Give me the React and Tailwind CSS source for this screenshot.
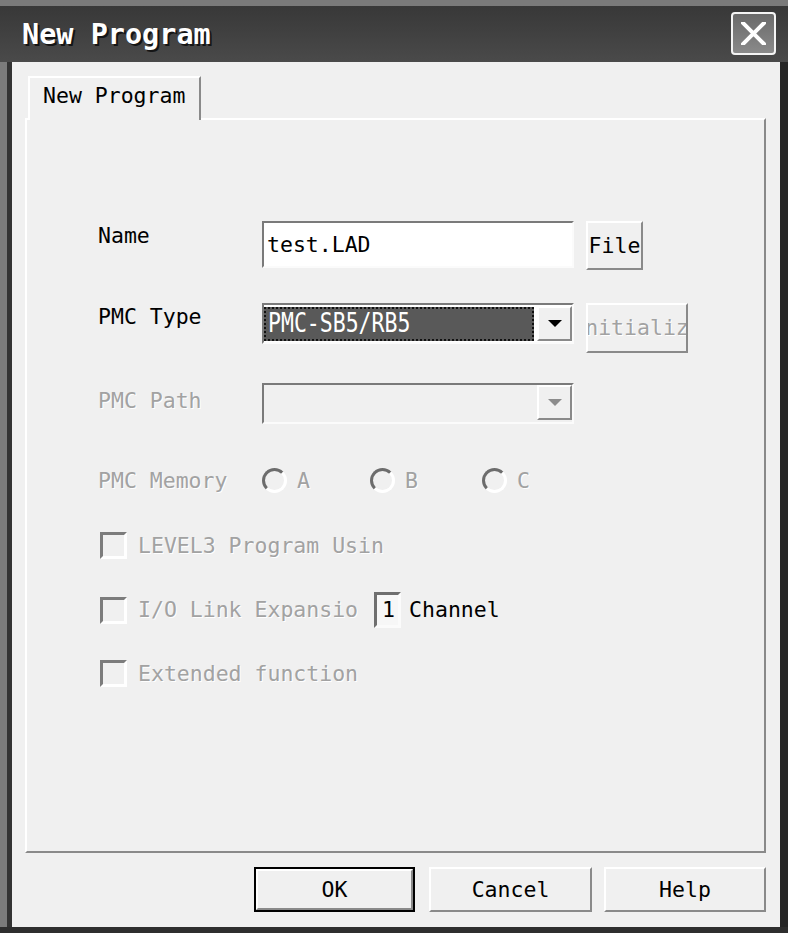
import React from 'react';

// Classic disabled-looking Windows dialog, greyscale like the scan.
const raised =
  'border-2 border-t-white border-l-white border-r-[#8a8a8a] border-b-[#8a8a8a] bg-[#f0f0f0]';
const sunken =
  'border-2 border-t-[#7a7a7a] border-l-[#7a7a7a] border-r-[#fbfbfb] border-b-[#fbfbfb]';
const grayText = 'text-[#a2a2a2] [text-shadow:1px_1px_0_#ffffff]';

const CheckBox = () => (
  <div className="ml-[2px] w-[27px] h-[27px] shrink-0 border-[3px] border-t-[#7c7c7c] border-l-[#7c7c7c] border-r-white border-b-white bg-[#f0f0f0]" />
);

const Radio = ({ label, width }) => (
  <div className="flex items-center gap-[10px]" style={{ width }}>
    <div className="w-[25px] h-[25px] shrink-0 rounded-full border-[3px] border-t-[#6c6c6c] border-l-[#6c6c6c] border-r-white border-b-white bg-[#f0f0f0]" />
    <span className={grayText}>{label}</span>
  </div>
);

const Triangle = ({ color }) => (
  <svg width="14" height="8" viewBox="0 0 14 8">
    <path d="M0 0 H14 L7 7 Z" fill={color} />
  </svg>
);

export default function App() {
  return (
    <div className="w-[788px] h-[933px] bg-[#2e2e2e] font-['DejaVu_Sans_Mono',monospace] text-[21.5px] leading-[22px] text-black overflow-hidden">
      {/* Title bar */}
      <div className="h-[62px] flex items-start justify-between border-t-[6px] border-t-[#7a7a7a] bg-linear-to-b from-[#383838] to-[#4a4a4a]">
        <div className="pl-[22px] pt-[14px] text-white font-bold text-[28.5px] leading-[29px] [text-shadow:2px_2px_0_#151515]">
          New Program
        </div>
        <div className="mt-[6px] mr-[12px] w-[45px] h-[43px] rounded-[4px] border-2 border-[#f4f4f4] bg-linear-to-b from-[#6a6a6a] to-[#8a8a8a] flex items-center justify-center">
          <svg width="25" height="23" viewBox="0 0 25 23">
            <path d="M2 1 L23 22 M23 1 L2 22" stroke="#ffffff" strokeWidth="4" strokeLinecap="square" />
          </svg>
        </div>
      </div>

      <div className="flex">
        <div className="w-[7px] h-[865px] bg-[#7b7b7b]" />
        <div className="w-[5px] h-[865px] bg-[#333333]" />

        {/* Dialog body */}
        <div className="w-[768px] h-[865px] bg-[#f0f0f0] pt-[14px] pl-[13px] flex flex-col">
          {/* Tab header */}
          <div className="ml-[3px] w-[173px] h-[44px] -mb-[2px] relative z-10 bg-[#f0f0f0] border-t-2 border-l-2 border-r-2 border-t-white border-l-white border-r-[#8a8a8a] pt-[7px] pl-[13px]">
            New Program
          </div>

          {/* Tab panel */}
          <div className="w-[741px] h-[735px] border-2 border-t-white border-l-white border-r-[#8a8a8a] border-b-[#8a8a8a] pl-[71px] pt-[101px] flex flex-col">
            {/* Name */}
            <div className="flex h-[49px]">
              <div className="w-[164px] pt-[4px]">Name</div>
              <div className={`w-[312px] h-[47px] bg-white flex items-center pl-[3px] ${sunken}`}>test.LAD</div>
              <div className={`ml-[12px] w-[57px] h-[49px] flex items-center justify-center overflow-hidden whitespace-nowrap ${raised}`}>
                File
              </div>
            </div>

            {/* PMC Type */}
            <div className="flex h-[50px] mt-[33px]">
              <div className="w-[164px] pt-[3px]">PMC Type</div>
              <div className={`w-[312px] h-[41px] bg-white flex items-center ${sunken}`}>
                <div className="w-[270px] h-[34px] bg-[#595959] border-2 border-dotted border-[#111111] flex items-center pl-[2px] text-white">
                  <span className="inline-block scale-y-[1.2]">PMC-SB5/RB5</span>
                </div>
                <div className={`ml-auto w-[35px] h-[35px] flex items-center justify-center ${raised}`}>
                  <Triangle color="#000000" />
                </div>
              </div>
              <div className={`ml-[12px] w-[102px] h-[50px] flex items-center justify-center overflow-hidden whitespace-nowrap ${raised}`}>
                <span className={grayText}>Initialize</span>
              </div>
            </div>

            {/* PMC Path */}
            <div className="flex h-[41px] mt-[30px]">
              <div className={`w-[164px] pt-[7px] ${grayText}`}>PMC Path</div>
              <div className={`w-[312px] h-[41px] bg-[#f0f0f0] flex items-start ${sunken}`}>
                <div className={`ml-auto w-[35px] h-[35px] flex items-center justify-center ${raised}`}>
                  <Triangle color="#8c8c8c" />
                </div>
              </div>
            </div>

            {/* PMC Memory */}
            <div className="flex items-center h-[25px] mt-[44px]">
              <div className={`w-[164px] ${grayText}`}>PMC Memory</div>
              <Radio label="A" width={108} />
              <Radio label="B" width={112} />
              <Radio label="C" width={100} />
            </div>

            {/* LEVEL3 */}
            <div className="flex items-center h-[27px] mt-[39px]">
              <CheckBox />
              <span className={`ml-[11px] ${grayText}`}>LEVEL3 Program Usin</span>
            </div>

            {/* I/O Link */}
            <div className="flex items-center h-[36px] mt-[33px]">
              <CheckBox />
              <span className={`ml-[11px] ${grayText}`}>I/O Link Expansio</span>
              <div className="ml-[16px] w-[27px] h-[36px] bg-[#f7f7f7] flex items-center pl-[5px] border-[3px] border-t-[#6f6f6f] border-l-[#6f6f6f] border-r-[#fbfbfb] border-b-[#fbfbfb]">
                1
              </div>
              <span className="ml-[8px]">Channel</span>
            </div>

            {/* Extended */}
            <div className="flex items-center h-[27px] mt-[32px]">
              <CheckBox />
              <span className={`ml-[11px] ${grayText}`}>Extended function</span>
            </div>
          </div>

          {/* Buttons */}
          <div className="mt-[14px] pr-[14px] flex justify-end">
            <div className="w-[161px] h-[45px] border-2 border-black">
              <div className={`w-full h-full flex items-center justify-center ${raised}`}>OK</div>
            </div>
            <div className={`ml-[14px] w-[163px] h-[45px] flex items-center justify-center ${raised}`}>Cancel</div>
            <div className={`ml-[12px] w-[162px] h-[45px] flex items-center justify-center ${raised}`}>Help</div>
          </div>
        </div>

        <div className="w-[8px] h-[865px] bg-[#262626]" />
      </div>
    </div>
  );
}
